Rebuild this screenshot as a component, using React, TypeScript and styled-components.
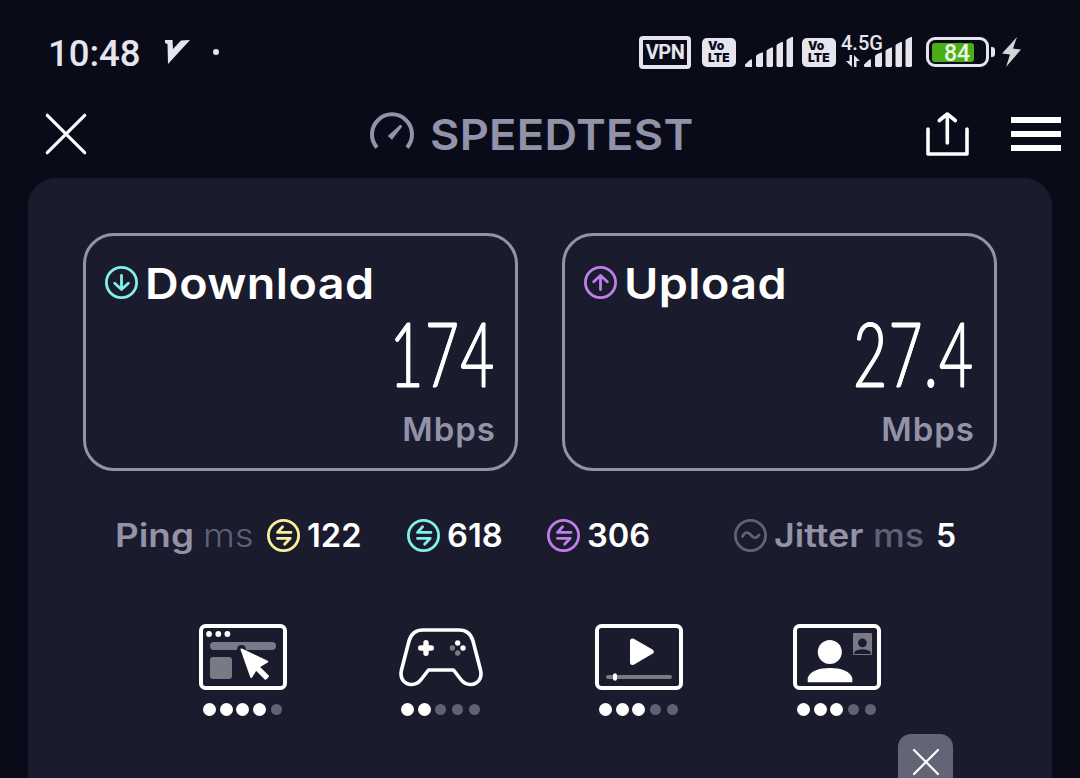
import React from 'react';
import styled, { createGlobalStyle } from 'styled-components';

const colors = {
  bg: '#0a0b19',
  panel: '#1b1b2e',
  muted: '#9293a8',
  dim: '#606175',
  status: '#e6e5ee',
  cyan: '#80f0e8',
  purple: '#bf7eec',
  yellow: '#fbf09a',
};

const GlobalStyle = createGlobalStyle`
  * {
    box-sizing: border-box;
  }

  body {
    margin: 0;
    background: ${colors.bg};
    overflow: hidden;
  }

  svg {
    display: block;
    flex: none;
    overflow: visible;
  }
`;

const Screen = styled.div`
  display: flex;
  flex-direction: column;
  width: 1080px;
  height: 778px;
  overflow: hidden;
  background: ${colors.bg};
  color: #fff;
  font-family: Inter, 'Liberation Sans', sans-serif;
`;

const StatusBar = styled.div`
  display: flex;
  align-items: center;
  flex: none;
  height: 98px;
  padding: 6px 59px 0 48px;
  color: ${colors.status};
  font-family: Roboto, sans-serif;
`;

const Clock = styled.div`
  width: 117px;
  font-size: 36.5px;
  font-weight: 500;
  line-height: 44px;
  padding-top: 4px;
`;

const NotificationDot = styled.div`
  width: 6px;
  height: 6px;
  margin-left: 23px;
  border-radius: 50%;
  background: ${colors.status};
`;

const StatusIcons = styled.div`
  display: flex;
  align-items: center;
  margin-left: auto;
`;

const VpnBadge = styled.div`
  display: flex;
  align-items: center;
  justify-content: center;
  width: 52px;
  height: 33px;
  margin-right: 11px;
  border: 4px solid ${colors.status};
  border-radius: 4px;
  font-size: 20px;
  font-weight: 700;
  letter-spacing: -0.5px;
`;

const VolteBadge = styled.div<{ $gap: number }>`
  display: flex;
  flex-direction: column;
  justify-content: center;
  width: 34px;
  height: 29px;
  margin-right: ${(props) => props.$gap}px;
  padding-left: 6px;
  border-radius: 5px;
  background: ${colors.status};
  color: ${colors.bg};
  font-family: Inter, sans-serif;
  font-size: 12px;
  font-weight: 900;
  line-height: 12px;
  letter-spacing: 0.1px;
`;

const MobileData = styled.div`
  position: relative;
  display: flex;
  align-items: flex-end;
  width: 70px;
  height: 30px;
  margin: 0 14px 0 0;
  padding-left: 4px;
  gap: 4px;
`;

const NetworkType = styled.span`
  position: absolute;
  top: -4px;
  left: -1px;
  font-size: 20px;
  line-height: 20px;
  font-weight: 500;
`;

const Battery = styled.div`
  display: flex;
  align-items: center;
  width: 63px;
  height: 30px;
  padding: 3px;
  border: 3px solid ${colors.status};
  border-radius: 9px;
`;

const BatteryLevel = styled.div`
  display: flex;
  align-items: center;
  width: 42px;
  height: 19px;
  padding: 3px 0 0 12px;
  border-radius: 3px;
  background: #4cae15;
  color: #edf7e6;
  font-size: 23px;
  font-weight: 500;
  white-space: nowrap;
`;

const BatteryTip = styled.div`
  width: 4px;
  height: 10px;
  margin: 0 7px 0 2px;
  border-radius: 0 3px 3px 0;
  background: ${colors.status};
`;

const Header = styled.header`
  display: flex;
  align-items: center;
  flex: none;
  height: 72px;
  margin-bottom: 8px;
  padding: 0 19px 0 45px;
`;

const Brand = styled.div`
  display: flex;
  align-items: center;
  margin-left: 283px;
  color: ${colors.muted};
`;

const Wide = styled.span<{ $x: number }>`
  display: inline-block;
  transform: scaleX(${(props) => props.$x});
  transform-origin: left center;
`;

const BrandName = styled.span`
  margin-left: 16px;
  font-size: 43px;
  font-weight: 600;
  letter-spacing: 0.3px;
  line-height: 52px;
`;

const HeaderActions = styled.div`
  display: flex;
  align-items: center;
  gap: 42px;
  margin-left: auto;
`;

const Burger = styled.div`
  display: flex;
  flex-direction: column;
  gap: 8px;
  width: 50px;

  span {
    height: 6px;
    background: #fff;
  }
`;

const Panel = styled.main`
  flex: 1 0 auto;
  display: flex;
  flex-direction: column;
  margin: 0 28px;
  padding: 55px 55px 0;
  border-radius: 28px 28px 0 0;
  background: ${colors.panel};
`;

const Results = styled.div`
  display: grid;
  grid-template-columns: 435px 435px;
  gap: 44px;
`;

const ResultCard = styled.section`
  display: flex;
  flex-direction: column;
  height: 238px;
  padding: 20px 19px 0;
  border: 3px solid ${colors.muted};
  border-radius: 31px;
`;

const ResultTitle = styled.div`
  display: flex;
  align-items: center;
  gap: 7px;
  height: 53px;
  font-size: 43px;
  font-weight: 600;
  letter-spacing: 0.4px;
`;

const ResultValue = styled.div`
  align-self: flex-end;
  height: 100px;
  font-family: Lato, sans-serif;
  font-size: 91px;
  font-weight: 300;
  line-height: 86px;
  letter-spacing: 2.5px;
  -webkit-text-stroke: 0.8px #fff;
  text-shadow: 1px 0 #fff, -1px 0 #fff;
  transform: scaleX(0.64);
  transform-origin: right center;
`;

const ResultUnit = styled.div`
  align-self: flex-end;
  height: 40px;
  color: ${colors.muted};
  font-size: 33px;
  font-weight: 600;
  line-height: 40px;
  letter-spacing: 1px;
`;

const Latency = styled.div`
  display: flex;
  align-items: center;
  height: 48px;
  margin-top: 40px;
  padding-left: 32px;
  font-size: 32px;
  font-weight: 600;
`;

const LatencyLabel = styled.span<{ $width: number }>`
  width: ${(props) => props.$width}px;
  color: ${colors.muted};
  white-space: nowrap;
`;

const LatencyUnit = styled.span<{ $width: number; $weight: number }>`
  width: ${(props) => props.$width}px;
  color: ${colors.dim};
  font-weight: ${(props) => props.$weight};
`;

const LatencyItem = styled.div<{ $width: number }>`
  display: flex;
  align-items: center;
  gap: 7px;
  width: ${(props) => props.$width}px;
`;

const Activities = styled.div`
  display: grid;
  grid-template-columns: repeat(4, 198px);
  margin: 65px 0 0 61px;
`;

const Activity = styled.div`
  display: flex;
  flex-direction: column;
  align-items: center;
`;

const Rating = styled.div`
  display: grid;
  grid-template-columns: repeat(5, 16.8px);
  place-items: center;
  height: 14px;
  margin-top: 12px;
`;

const RatingDot = styled.span<{ $on: boolean }>`
  width: ${(props) => (props.$on ? 13 : 11)}px;
  height: ${(props) => (props.$on ? 13 : 11)}px;
  border-radius: 50%;
  background: ${(props) => (props.$on ? '#fff' : colors.dim)};
`;

const DismissButton = styled.button`
  display: flex;
  justify-content: center;
  flex: none;
  align-self: flex-end;
  width: 55px;
  height: 56px;
  margin: 18px 44px 0 0;
  padding: 15px 0 0;
  border: none;
  border-radius: 13px;
  background: #646477;
`;

const Signal = () => (
  <svg width="48" height="30" fill={colors.status}>
    <path d="M0 28.5V27.5L5.5 22.5H7V30H1Q0 30 0 28.5ZM11 19.5Q11 17.5 17 15.5H18V29L17 30H12L11 29ZM21.5 14Q21.5 12.5 27 10.5H28V29L27 30H22.5L21.5 29ZM31.5 8.5Q31.5 7 37 5H38V29L37 30H32.5L31.5 29ZM41.5 3.5Q41.5 2 47 0H48V29L47 30H42.5L41.5 29Z" />
  </svg>
);

const Volte = ({ gap }: { gap: number }) => (
  <VolteBadge $gap={gap}>
    <span>Vo</span>
    <span>LTE</span>
  </VolteBadge>
);

interface CircleIconProps {
  color: string;
  d: string;
}

const CircleIcon: React.FC<CircleIconProps> = ({ color, d }) => (
  <svg width="33" height="33" fill="none" stroke={color} strokeWidth="2.8" strokeLinecap="round" strokeLinejoin="round">
    <circle cx="16.5" cy="16.5" r="15.1" />
    <path d={d} />
  </svg>
);

const DOWN = 'M16.5 9.5V23.5M9.7 17.2 16.5 23.5 23.3 17.2';
const UP = 'M16.5 23.5V9.5M9.7 15.8 16.5 9.5 23.3 15.8';
const SWAP = 'M24 13.4H10.5L15.6 7.8M10.5 19.4H23.2L17.6 25.2';
const WAVE = 'M8.5 17.5C10.5 12.5 14.3 12.5 17 16.2C19.8 20 22.8 19.5 25 16';

const Frame = () => <rect x="2" y="2" width="84" height="62" rx="4.5" fill="none" stroke="#fff" strokeWidth="4" />;

const BrowserIcon = () => (
  <svg width="88" height="66" fill="#fff">
    <Frame />
    <circle cx="10" cy="10" r="2.9" />
    <circle cx="19.3" cy="10" r="2.9" />
    <circle cx="28.4" cy="10" r="2.9" />
    <rect x="11" y="18" width="66" height="8" rx="4" fill="#7a7986" />
    <rect x="11" y="33" width="22" height="22" rx="3" fill="#7a7986" />
    <circle cx="42.5" cy="25.5" r="4.5" fill={colors.panel} />
    <path
      d="M42.5 25.5 68.2 37.6 59.5 42.8 69 52.3 66.5 54.8 57 45.3 52.2 53Z"
      stroke="#fff"
      strokeWidth="2"
      strokeLinejoin="round"
    />
  </svg>
);

const GamepadIcon = () => (
  <svg width="84" height="66" fill="#fff">
    <path
      transform="translate(0 4)"
      d="M24 2H60C67 2 72 6 74 13L81.5 42C83.5 50 79 56.5 71.5 56.5C67 56.5 64 54.5 61.5 51L54.5 42H29.5L22.5 51C20 54.5 17 56.5 12.5 56.5C5 56.5 .5 50 2.5 42L10 13C12 6 17 2 24 2Z"
      fill="none"
      stroke="#fff"
      strokeWidth="3.6"
      strokeLinejoin="round"
    />
    <path d="M21.7 24H32.3M27 18.7V29.3" stroke="#fff" strokeWidth="5.4" strokeLinecap="round" />
    <circle cx="58.7" cy="19" r="2.7" />
    <circle cx="64" cy="24" r="2.7" />
    <circle cx="53.4" cy="24" r="2.7" fill="#7a7986" />
    <circle cx="58.7" cy="29" r="2.7" fill="#7a7986" />
  </svg>
);

const VideoIcon = () => (
  <svg width="88" height="66" fill="#fff">
    <Frame />
    <path d="M37.5 17V38.5L56.2 27.7Z" stroke="#fff" strokeWidth="5" strokeLinejoin="round" />
    <rect x="11" y="51" width="66" height="4" rx="2" fill="#7a7986" />
    <rect x="18" y="49.3" width="4" height="7.4" rx="2" />
  </svg>
);

const CallIcon = () => (
  <svg width="88" height="66" fill="#fff">
    <Frame />
    <circle cx="36.8" cy="28" r="12" />
    <path d="M14.7 58.3V54C17 47 26 44 37 44S57 47 59.3 54V58.3Z" />
    <rect x="60" y="9" width="19" height="22" rx="1" fill="#7a7986" />
    <circle cx="69.4" cy="18.8" r="4.4" fill={colors.panel} />
    <path d="M61.3 30V28C63 26 66 25.2 69.5 25.2S76 26 77.8 28V30Z" fill={colors.panel} />
  </svg>
);

const results = [
  { name: 'Download', value: '174', color: colors.cyan, icon: DOWN },
  { name: 'Upload', value: '27.4', color: colors.purple, icon: UP },
];

const pings = [
  { value: 122, color: colors.yellow },
  { value: 618, color: colors.cyan },
  { value: 306, color: colors.purple },
];

const activities = [
  { name: 'browsing', icon: <BrowserIcon />, score: 4 },
  { name: 'gaming', icon: <GamepadIcon />, score: 2 },
  { name: 'streaming', icon: <VideoIcon />, score: 3 },
  { name: 'calls', icon: <CallIcon />, score: 3 },
];

const App: React.FC = () => {
  return (
    <Screen>
      <GlobalStyle />
      <StatusBar>
        <Clock>10:48</Clock>
        <svg width="25" height="24" fill={colors.status}>
          <path d="M0 0H7.5L8 9 16 .5 25 0 3 24 2.5 4 0 3Z" />
        </svg>
        <NotificationDot />
        <StatusIcons>
          <VpnBadge>VPN</VpnBadge>
          <Volte gap={9} />
          <Signal />
          <svg width="9" height="1" />
          <Volte gap={6} />
          <MobileData>
            <NetworkType>4.5G</NetworkType>
            <svg width="14" height="12" fill={colors.status}>
              <path d="M3.5 0H6V12L0 6H3.5ZM8 0 14 6H10.5V12H8Z" />
            </svg>
            <Signal />
          </MobileData>
          <Battery>
            <BatteryLevel>84</BatteryLevel>
          </Battery>
          <BatteryTip />
          <svg width="19" height="30" fill="#d5d4d9">
            <path d="M15 0 0 16.5 8 17.5 4 30 19 12.5 11 11.5Z" />
          </svg>
        </StatusIcons>
      </StatusBar>

      <Header>
        <svg width="42" height="42" stroke="#fff" strokeWidth="3.2" strokeLinecap="round">
          <path d="M2.3 2.3 39.7 39.7M39.7 2.3 2.3 39.7" />
        </svg>
        <Brand>
          <svg width="44" height="44" fill="none" stroke="currentColor" strokeWidth="4">
            <path d="M7 35.6A20 20 0 1 1 37 35.6" />
            <path d="M17.7 24 22 27.7 32.3 14.5 30.5 12.6Z" fill="currentColor" stroke="none" />
          </svg>
          <BrandName>
            <Wide $x={1.05}>SPEEDTEST</Wide>
          </BrandName>
        </Brand>
        <HeaderActions>
          <svg width="43" height="44" fill="none" stroke="#fff" strokeWidth="3.6" strokeLinecap="round" strokeLinejoin="round">
            <path d="M2 17V42H41V17M21.3 31V2M13.3 8.5 21.3 2 29.3 8.5" />
          </svg>
          <Burger>
            <span />
            <span />
            <span />
          </Burger>
        </HeaderActions>
      </Header>

      <Panel>
        <Results>
          {results.map((result) => (
            <ResultCard key={result.name}>
              <ResultTitle>
                <CircleIcon color={result.color} d={result.icon} />
                <Wide $x={1.085}>{result.name}</Wide>
              </ResultTitle>
              <ResultValue>{result.value}</ResultValue>
              <ResultUnit>Mbps</ResultUnit>
            </ResultCard>
          ))}
        </Results>

        <Latency>
          <LatencyLabel $width={88}>
            <Wide $x={1.15}>Ping</Wide>
          </LatencyLabel>
          <LatencyUnit $width={64} $weight={300}>
            <Wide $x={1.14}>ms</Wide>
          </LatencyUnit>
          {pings.map((ping) => (
            <LatencyItem key={ping.value} $width={140}>
              <CircleIcon color={ping.color} d={SWAP} />
              <Wide $x={1.02}>{ping.value}</Wide>
            </LatencyItem>
          ))}
          <svg width="47" height="1" />
          <LatencyItem $width={139}>
            <CircleIcon color={colors.dim} d={WAVE} />
            <LatencyLabel $width={98}>
              <Wide $x={1.12}>Jitter</Wide>
            </LatencyLabel>
          </LatencyItem>
          <LatencyUnit $width={63} $weight={500}>
            <Wide $x={1.12}>ms</Wide>
          </LatencyUnit>
          5
        </Latency>

        <Activities>
          {activities.map((activity) => (
            <Activity key={activity.name}>
              {activity.icon}
              <Rating>
                {[1, 2, 3, 4, 5].map((dot) => (
                  <RatingDot key={dot} $on={dot <= activity.score} />
                ))}
              </Rating>
            </Activity>
          ))}
        </Activities>

        <DismissButton>
          <svg width="26" height="26" stroke="#fff" strokeWidth="2.2" strokeLinecap="round">
            <path d="M1 1 25 25M25 1 1 25" />
          </svg>
        </DismissButton>
      </Panel>
    </Screen>
  );
};

export default App;
